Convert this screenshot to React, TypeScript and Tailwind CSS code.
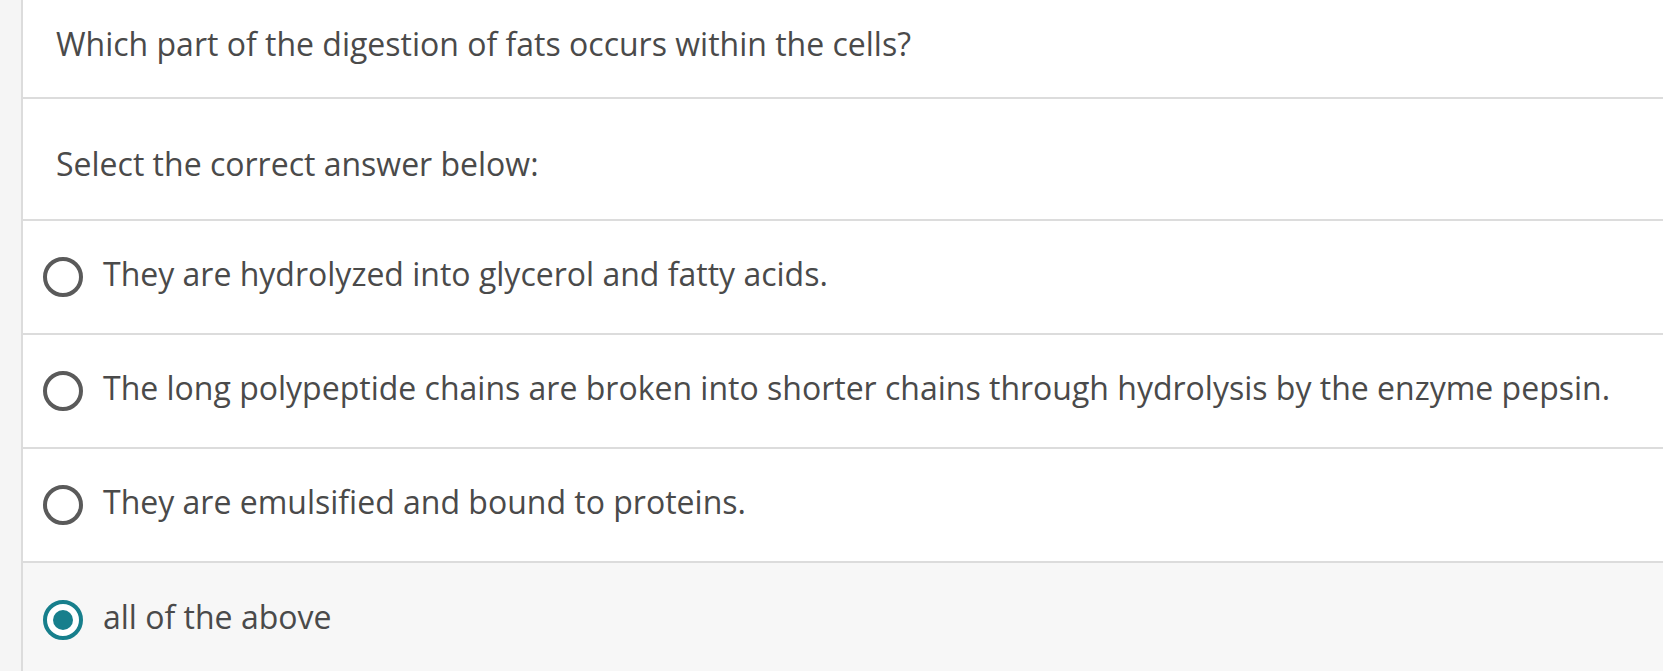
import React, { useState } from "react";

const options = [
  "They are hydrolyzed into glycerol and fatty acids.",
  "The long polypeptide chains are broken into shorter chains through hydrolysis by the enzyme pepsin.",
  "They are emulsified and bound to proteins.",
  "all of the above",
];

const Radio: React.FC<{ checked: boolean }> = ({ checked }) =>
  checked ? (
    <span className="flex h-[40px] w-[40px] shrink-0 items-center justify-center rounded-full border-[4px] border-[#177f8c] bg-white">
      <span className="h-[20px] w-[20px] rounded-full bg-[#177f8c]"></span>
    </span>
  ) : (
    <span className="h-[40px] w-[40px] shrink-0 rounded-full border-[4px] border-[#5a5a5a] bg-white"></span>
  );

const App: React.FC = () => {
  const [selected, setSelected] = useState(3);

  return (
    <div className="flex min-h-[671px] w-full bg-[#f5f5f5] font-['Open_Sans',sans-serif] text-[32px] leading-[44px] text-[#4a4a4a]">
      <div className="w-[21px] shrink-0"></div>
      <div className="flex-1 border-l-2 border-[#dcdcdc] bg-white">
        <div className="flex h-[99px] items-center border-b-2 border-[#dcdcdc] pb-[10px] pl-[33px]">
          Which part of the digestion of fats occurs within the cells?
        </div>
        <div className="flex h-[122px] items-center border-b-2 border-[#dcdcdc] pt-[10px] pl-[33px]">
          Select the correct answer below:
        </div>
        {options.map((opt, i) => (
          <div
            key={i}
            onClick={() => setSelected(i)}
            className={`flex h-[114px] cursor-pointer items-center gap-[20px] pl-[20px] ${i < options.length - 1 ? "border-b-2 border-[#dcdcdc]" : ""} ${selected === i ? "bg-[#f7f7f7]" : "bg-white"}`}
          >
            <Radio checked={selected === i} />
            <span className="-mt-[6px]">{opt}</span>
          </div>
        ))}
      </div>
    </div>
  );
};

export default App;
